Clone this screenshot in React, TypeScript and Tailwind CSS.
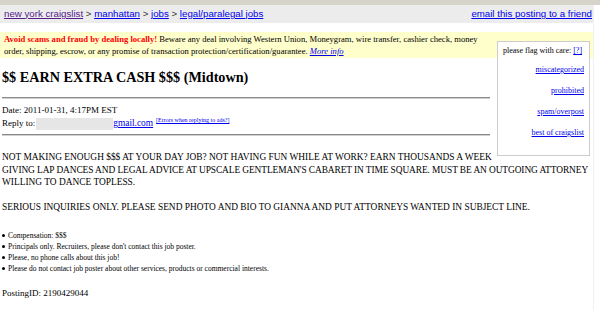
import React from "react";

const bullets = [
  "Compensation: $$$",
  "Principals only. Recruiters, please don't contact this job poster.",
  "Please, no phone calls about this job!",
  "Please do not contact job poster about other services, products or commercial interests.",
];

export default function App() {
  return (
    <div className="w-[600px] h-[310px] overflow-hidden bg-white text-black font-['Liberation_Serif','Times_New_Roman',serif]">
      <div className="h-[5px] bg-[#d6d3ca]" />
      <div className="flex">
        <div className="flex-1 min-w-0 relative">
          <div className="h-[18px] bg-[#ececec] flex items-center justify-between pl-[4px] pr-[1px] text-[9.7px] font-['Liberation_Sans',Arial,sans-serif]">
            <div className="whitespace-nowrap">
              <a className="underline text-[#551a8b]">new york craigslist</a>
              <span className="text-[#333]"> &gt; </span>
              <a className="underline text-[#0000ee]">manhattan</a>
              <span className="text-[#333]"> &gt; </span>
              <a className="underline text-[#0000ee]">jobs</a>
              <span className="text-[#333]"> &gt; </span>
              <a className="underline text-[#0000ee]">legal/paralegal jobs</a>
            </div>
            <a className="underline text-[#0000ee] whitespace-nowrap">email this posting to a friend</a>
          </div>

          <div className="mt-[9px] bg-[#ffffcc] pl-[4px] pr-[104px] py-[1px] text-[8.6px] leading-[12px]">
            <span className="text-[#ff0000] font-bold">Avoid scams and fraud by dealing locally!</span> Beware any deal involving Western Union, Moneygram, wire transfer, cashier check, money order, shipping, escrow, or any promise of transaction protection/certification/guarantee.{" "}
            <a className="underline italic text-[#0000ee]">More info</a>
          </div>

          <div className="absolute left-[497px] top-[36px] w-[93px] h-[115px] bg-white border border-[#cccccc] px-[5px] pt-[4px] text-[8px] leading-[10px] text-right">
            <div className="text-left whitespace-nowrap">
              please flag with care: <a className="underline text-[#0000ee]">[?]</a>
            </div>
            <div className="flex flex-col items-end gap-[11px] mt-[9px]">
              <a className="underline text-[#0000ee]">miscategorized</a>
              <a className="underline text-[#0000ee]">prohibited</a>
              <a className="underline text-[#0000ee]">spam/overpost</a>
              <a className="underline text-[#0000ee]">best of craigslist</a>
            </div>
          </div>

          <div className="pl-[2px]">
            <h2 className="text-[14.2px] font-bold mt-[11px] leading-[16px]">$$ EARN EXTRA CASH $$$ (Midtown)</h2>
            <div className="mt-[12px] w-[488px] h-[2px] bg-[#8a8a8a] border-b border-[#d0d0d0]" />
            <div className="mt-[5px] text-[9px] leading-[13px]">
              <div>Date: 2011-01-31, 4:17PM EST</div>
              <div className="flex items-center">
                <span>Reply to:</span>
                <span className="inline-block w-[77px] h-[12px] bg-[#e6e6e6] ml-[1px]" />
                <a className="underline text-[#0000ee] text-[9.4px]">gmail.com</a>
                <a className="underline text-[#0000ee] text-[6px] leading-[7px] ml-[3px] self-start">[Errors when replying to ads?]</a>
              </div>
            </div>
            <div className="mt-[4px] w-[488px] h-[2px] bg-[#8a8a8a] border-b border-[#d0d0d0]" />

            <div className="mt-[15px] text-[9.4px] leading-[12.5px] whitespace-nowrap">
              NOT MAKING ENOUGH $$$ AT YOUR DAY JOB? NOT HAVING FUN WHILE AT WORK? EARN THOUSANDS A WEEK
              <br />
              <span className="tracking-[-0.09px]">GIVING LAP DANCES AND LEGAL ADVICE AT UPSCALE GENTLEMAN'S CABARET IN TIME SQUARE. MUST BE AN OUTGOING ATTORNEY</span>
              <br />
              WILLING TO DANCE TOPLESS.
              <br />
              <br />
              SERIOUS INQUIRIES ONLY. PLEASE SEND PHOTO AND BIO TO GIANNA AND PUT ATTORNEYS WANTED IN SUBJECT LINE.
            </div>

            <ul className="mt-[16px] text-[7.5px] leading-[11px]">
              {bullets.map((b) => (
                <li key={b} className="flex items-center">
                  <span className="w-[6px] flex-none flex items-center">
                    <span className="block w-[3px] h-[3px] rounded-full bg-black" />
                  </span>
                  <span>{b}</span>
                </li>
              ))}
            </ul>

            <div className="mt-[13px] text-[9px] leading-[13px]">PostingID: 2190429044</div>
          </div>
        </div>
        <div className="w-[7px] h-[305px] bg-white border-l border-[#f0f0f0]" />
      </div>
    </div>
  );
}
